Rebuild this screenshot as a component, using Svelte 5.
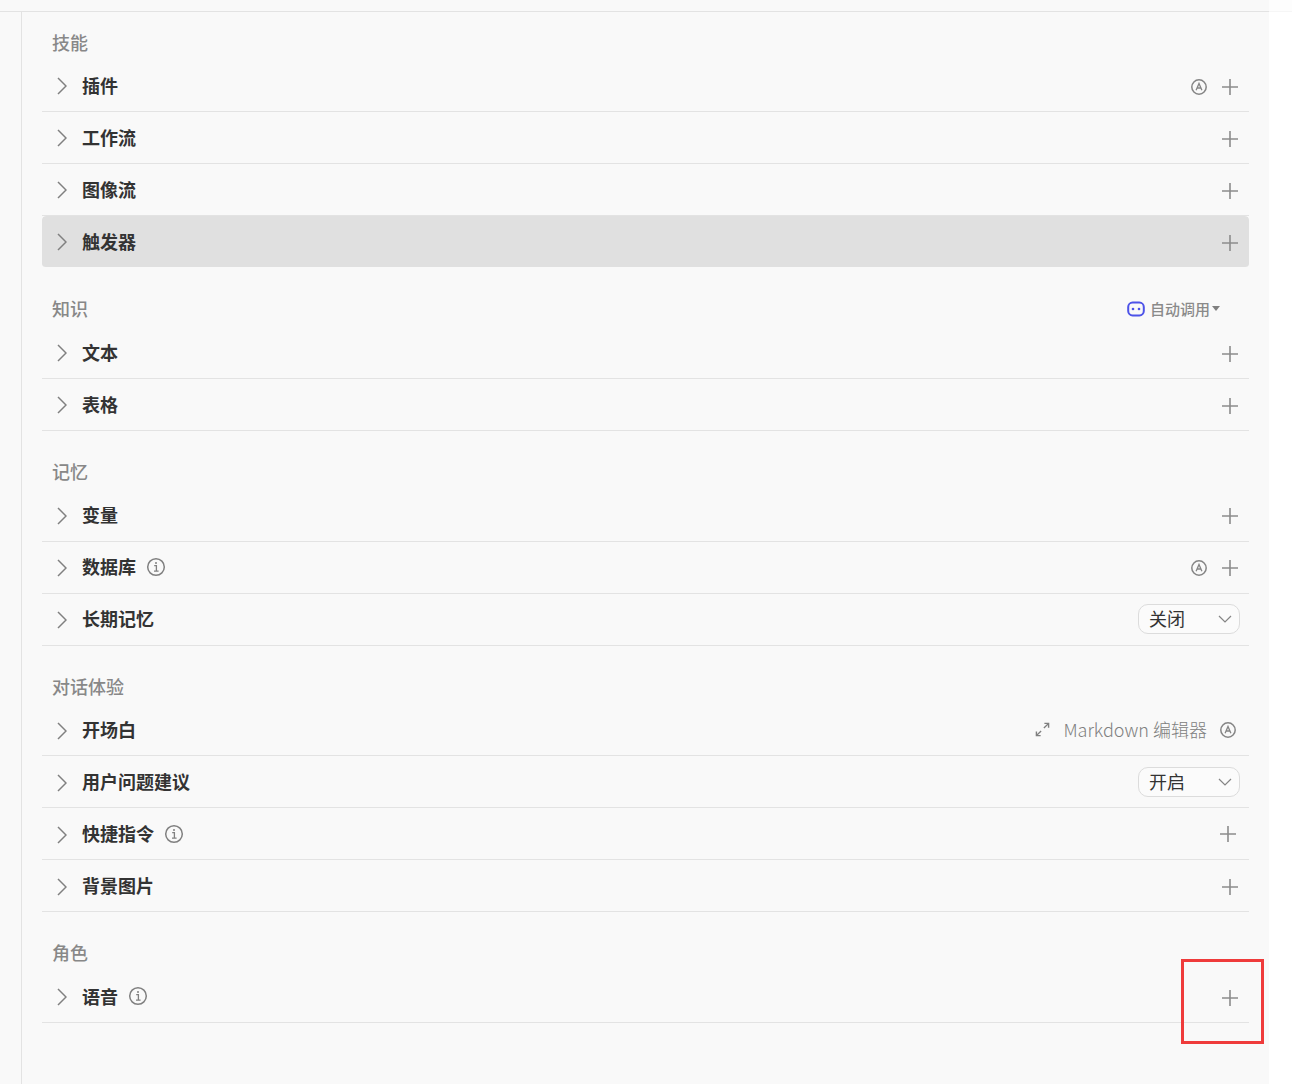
<script>
  const groups = [
    {
      title: '技能',
      rows: [
        { name: '插件', auto: true, add: true },
        { name: '工作流', add: true },
        { name: '图像流', add: true },
        { name: '触发器', add: true, active: true }
      ]
    },
    {
      title: '知识',
      invoke: true,
      rows: [
        { name: '文本', add: true },
        { name: '表格', add: true }
      ]
    },
    {
      title: '记忆',
      rows: [
        { name: '变量', add: true },
        { name: '数据库', info: true, auto: true, add: true },
        { name: '长期记忆', select: '关闭' }
      ]
    },
    {
      title: '对话体验',
      rows: [
        { name: '开场白', editor: true },
        { name: '用户问题建议', select: '开启' },
        { name: '快捷指令', info: true, add: true, shifted: true },
        { name: '背景图片', add: true }
      ]
    },
    {
      title: '角色',
      rows: [{ name: '语音', info: true, add: true }]
    }
  ];
</script>

{#snippet autoIcon()}
  <svg class="auto-icon" viewBox="0 0 16 16" fill="none">
    <circle cx="8" cy="8" r="7.2" stroke="#858585" stroke-width="1.5" />
    <path d="M5.1 11.2 8 4.4 10.9 11.2M6.1 9h3.8" stroke="#858585" stroke-width="1.3" />
  </svg>
{/snippet}

{#snippet row(item)}
  <div class="row" class:active={item.active}>
    <svg class="chevron" viewBox="0 0 10 18" fill="none">
      <path d="M1 1l8 8-8 8" stroke="#808080" stroke-width="1.5" />
    </svg>
    <span class="name">{item.name}</span>
    {#if item.info}
      <svg class="info" viewBox="0 0 20 20" fill="none">
        <circle cx="10" cy="10" r="8.3" stroke="#808080" stroke-width="1.5" />
        <path d="M8.2 8.6H10.4V14M8 14.2h4.6" stroke="#808080" stroke-width="1.3" />
        <circle cx="10" cy="5.9" r="1" fill="#808080" />
      </svg>
    {/if}
    <div class="actions" class:shifted={item.shifted}>
      {#if item.editor}
        <svg class="expand" viewBox="0 0 16 16" fill="none">
          <path d="M9.5 6.5 14 2M10 1.5h4.5V6M6.5 9.5 2 14M6 14.5H1.5V10" stroke="#808080" stroke-width="1.5" />
        </svg>
        <span class="editor">Markdown 编辑器</span>
        <span class="editor-auto">{@render autoIcon()}</span>
      {/if}
      {#if item.auto}
        <span class="auto">{@render autoIcon()}</span>
      {/if}
      {#if item.add}
        <svg class="plus" viewBox="0 0 16 16" fill="none">
          <path d="M8 0v16M0 8h16" stroke="#8c8c8c" stroke-width="1.6" />
        </svg>
      {/if}
      {#if item.select}
        <div class="select">
          <span class="select-value">{item.select}</span>
          <svg viewBox="0 0 14 8" fill="none">
            <path d="M1 1l6 6 6-6" stroke="#858585" stroke-width="1.2" />
          </svg>
        </div>
      {/if}
    </div>
  </div>
{/snippet}

<div class="page">
  <div class="top">
    <div class="top-main"></div>
    <div class="top-side"></div>
  </div>
  <div class="body">
    <div class="rail"></div>
    <main class="main">
      {#each groups as group}
        <section class="group">
          <header class="head">
            <h2>{group.title}</h2>
            {#if group.invoke}
              <div class="invoke">
                <svg viewBox="0 0 18 16" fill="none">
                  <rect x="1.2" y="1.6" width="15.6" height="12.8" rx="4.4" stroke="#4d53e8" stroke-width="2" />
                  <circle cx="6" cy="8" r="1.3" fill="#4d53e8" />
                  <circle cx="12" cy="8" r="1.3" fill="#4d53e8" />
                </svg>
                <span>自动调用</span>
                <i class="caret"></i>
              </div>
            {/if}
          </header>
          {#each group.rows as item}
            {@render row(item)}
          {/each}
        </section>
      {/each}
    </main>
  </div>
  <div class="marker"></div>
</div>

<style>
  :global(body) {
    background: #fff;
  }

  .page {
    position: relative;
    width: 1292px;
    height: 1084px;
    overflow: hidden;
    font-family: "Noto Sans CJK SC", "Noto Sans", sans-serif;
  }

  .top {
    display: flex;
    height: 12px;
  }

  .top-main {
    width: 1269px;
    flex: none;
    background: #f9f9f9;
    border-bottom: 1px solid #e3e3e3;
  }

  .top-side {
    flex: 1;
    background: #fdfdfd;
    border-bottom: 1px solid #f6f6f6;
  }

  .body {
    display: flex;
    width: 1269px;
    height: 1072px;
    background: #f9f9f9;
  }

  .rail {
    width: 21px;
    flex: none;
    border-right: 1px solid #e3e3e3;
  }

  .main {
    flex: 1;
    padding: 0 20px 0 20px;
    margin-top: -11px;
  }

  .group {
    display: flex;
    flex-direction: column;
  }

  .head {
    height: 58.85px;
    flex: none;
    padding-top: 28.55px;
    box-sizing: border-box;
    display: flex;
    align-items: flex-start;
    justify-content: space-between;
  }

  h2 {
    margin: 0 0 0 10px;
    font-size: 18px;
    line-height: 24px;
    font-weight: 500;
    color: #888;
  }

  .group:last-child h2 {
    margin-top: -0.6px;
  }

  .invoke {
    display: flex;
    align-items: center;
    margin: 0.45px 29px 0 0;
    height: 24px;
    font-size: 15px;
    font-weight: 500;
    color: #8a8a8a;
  }

  .invoke svg {
    width: 18px;
    height: 16px;
    margin-right: 5px;
  }

  .caret {
    margin-left: 2px;
    border: 4px solid transparent;
    border-top: 5px solid #808080;
    border-bottom: 0;
  }

  .row {
    display: flex;
    align-items: center;
    height: 52px;
    box-sizing: border-box;
    border-bottom: 1px solid #e3e3e3;
    padding-left: 15px;
    flex: none;
  }

  .row.active {
    background: #e0e0e0;
    background-clip: padding-box;
    border-bottom-color: transparent;
    border-radius: 4px;
  }

  .chevron {
    width: 10px;
    height: 18px;
    flex: none;
    margin: 1.4px 15px 0 0;
  }

  .name {
    font-size: 18px;
    font-weight: 700;
    color: #333;
    line-height: 24px;
    margin-bottom: 1.2px;
  }

  .info {
    width: 20px;
    height: 20px;
    margin: 0 0 0.6px 10px;
    flex: none;
  }

  .actions {
    margin-left: auto;
    display: flex;
    align-items: center;
    padding-right: 11px;
  }

  .actions.shifted {
    padding-right: 13px;
  }

  .auto {
    display: flex;
    margin: 2.8px 15px 0 0;
  }

  .auto-icon {
    width: 16px;
    height: 16px;
    display: block;
  }

  .plus {
    width: 16px;
    height: 16px;
    margin-top: 2.8px;
    display: block;
  }

  .shifted .plus {
    margin-top: 1px;
  }

  .expand {
    width: 15px;
    height: 15px;
    margin-right: 13px;
  }

  .editor {
    font-size: 18px;
    font-weight: 300;
    color: #808080;
    line-height: 24px;
    margin-bottom: 1.2px;
  }

  .editor-auto {
    display: flex;
    margin: 0 2px 0.6px 13px;
  }

  .select {
    display: flex;
    align-items: center;
    justify-content: space-between;
    width: 102px;
    height: 30px;
    box-sizing: border-box;
    margin-right: -2px;
    padding: 0 7px 0 10px;
    border: 1px solid #dcdcdc;
    border-radius: 10px;
    background: #fbfbfb;
    font-size: 18px;
    color: #333;
  }

  .select-value {
    margin-bottom: 1.2px;
  }

  .select svg {
    width: 14px;
    height: 8px;
  }

  .marker {
    position: absolute;
    left: 1181px;
    top: 959px;
    width: 83px;
    height: 85px;
    box-sizing: border-box;
    border: 3px solid #ef3b3b;
  }
</style>
